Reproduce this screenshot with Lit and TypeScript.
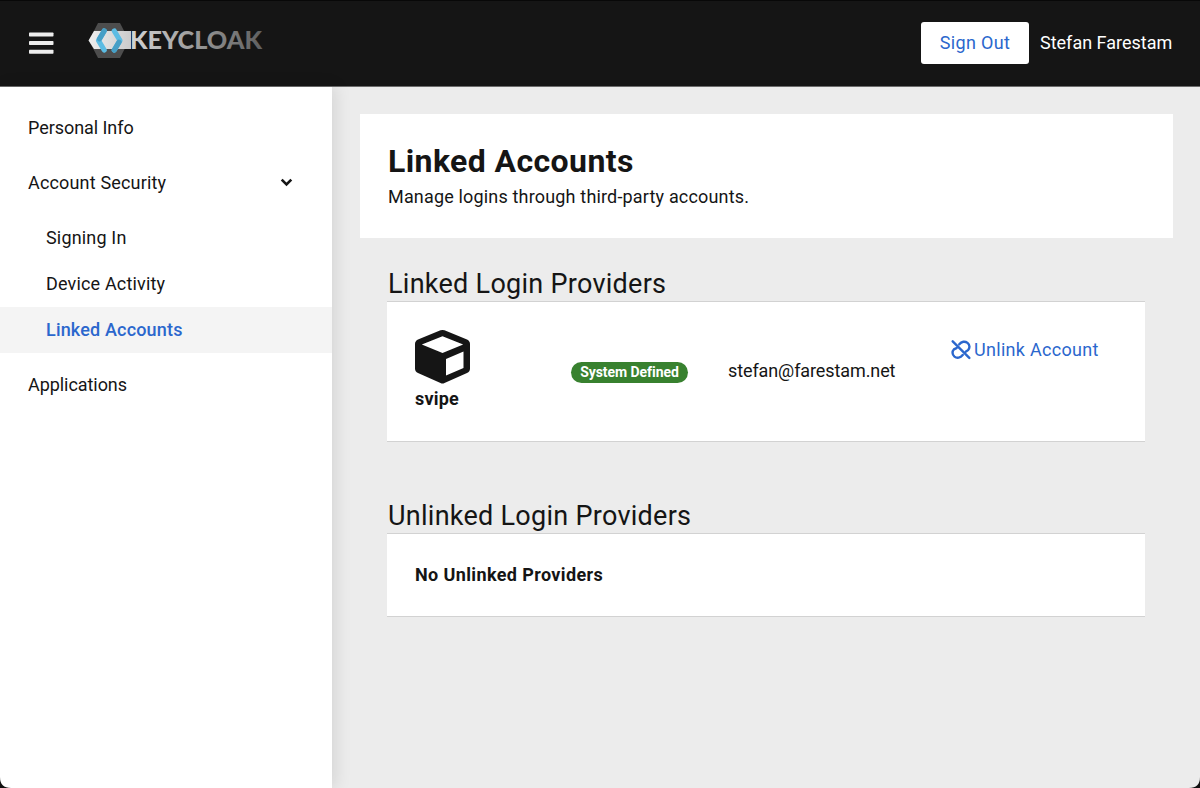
import { LitElement, html, css, svg } from "lit";
import { customElement } from "lit/decorators.js";

@customElement("app-root")
export class AppRoot extends LitElement {
  static styles = css`
    :host { display: flex; flex-direction: column; height: 788px; width: 1200px; box-sizing: border-box; overflow: hidden; position: relative; background: #ececec; color: #151515; font-family: Roboto, "Liberation Sans", sans-serif; font-size: 18px; line-height: 28px; letter-spacing: 0.17px; }
    * { box-sizing: border-box; }
    svg { display: block; flex: none; }
    header { height: 87px; flex: none; background: #151515; border-top: 1px solid #080808; border-bottom: 1px solid #6b6b6b; display: flex; align-items: center; padding: 0 28px 2px; color: #fff; }
    .logo { margin: -3px 0 0 34px; }
    .wordmark { font-family: Lato, sans-serif; font-weight: 900; font-size: 25px; letter-spacing: 0; }
    .signout { margin-left: auto; width: 108px; height: 42px; border-radius: 3px; background: #fff; color: #2b67cd; display: flex; align-items: center; justify-content: center; letter-spacing: 0.35px; }
    .user { width: 132px; margin-left: 11px; white-space: nowrap; letter-spacing: 0; }
    .body { flex: 1; display: flex; min-height: 0; }
    nav { width: 332px; background: #fff; padding-top: 12px; box-shadow: 3px 0 16px rgba(3, 3, 3, 0.11); display: flex; flex-direction: column; }
    .item { height: 55px; padding: 2px 39px 0 28px; display: flex; align-items: center; justify-content: space-between; }
    .tight { letter-spacing: -0.06px; }
    .group { padding: 6px 0 3px; }
    .sub { height: 46px; padding: 0 0 0 46px; display: flex; align-items: center; }
    .current { background: #f4f4f4; color: #2b67cd; font-weight: 500; }
    main { flex: 1; padding: 27px 27px 0 28px; display: flex; flex-direction: column; }
    .head { height: 124px; background: #fff; padding: 27px 28px; }
    h1 { margin: 0; font-size: 32px; line-height: 41px; font-weight: 700; letter-spacing: 0.4px; }
    .head p { margin: 0; line-height: 29px; }
    section { margin: 28px 28px 0 27px; }
    h2 { margin: 0; padding: 1px 0 0 1px; font-size: 27px; line-height: 34px; font-weight: 400; letter-spacing: 0.27px; }
    .list { background: #fff; border-top: 1px solid #d2d2d2; border-bottom: 1px solid #d2d2d2; }
    .row { height: 141px; display: grid; grid-template-columns: 156px 157px 223px 1fr; padding: 27px 28px 0; }
    .provider { display: flex; flex-direction: column; font-weight: 700; }
    .badge { justify-self: start; margin-top: 33px; width: 117px; height: 21px; border-radius: 11px; background: #38812f; color: #fff; font-size: 14px; line-height: 21px; font-weight: 700; text-align: center; letter-spacing: -0.05px; }
    .mail { margin-top: 28px; letter-spacing: -0.1px; }
    .unlink { display: flex; gap: 3px; margin-top: 7px; height: 28px; align-items: center; color: #2b67cd; white-space: nowrap; letter-spacing: 0.3px; }
    .second { margin-top: 56px; }
    .empty { height: 84px; padding: 0 28px; display: flex; align-items: center; font-weight: 700; letter-spacing: 0.38px; }
    .corners { position: absolute; left: 0; bottom: 0; }
  `;

  private logo() {
    return svg`<svg width="176" height="38" viewBox="0 0 176 38">
      <defs><linearGradient id="word" gradientUnits="userSpaceOnUse" x1="42" x2="174" y1="0" y2="0"><stop offset="0" stop-color="#d5d5d5"/><stop offset=".5" stop-color="#999"/><stop offset="1" stop-color="#606060"/></linearGradient>
      <linearGradient id="band" x1="0" x2="1"><stop offset="0" stop-color="#eee"/><stop offset="1" stop-color="#cbcbcb"/></linearGradient></defs>
      <path d="M10 1H32L41 18.500L32 36H10L1 18.500Z" fill="#4d4d4d"/>
      <path d="M6 9H43V27H6L.5 18.500Z" fill="url(#band)"/>
      <g stroke-width="5.200" stroke-linejoin="round" stroke-linecap="round" fill="none">
        <path d="M16.200 9L10.500 18.500L16.200 28" stroke="#5cbce3"/>
        <path d="M16.200 9L11.500 16.800" stroke="#469fc6"/>
        <path d="M26.300 9L32 18.500L26.300 28" stroke="#5cbce3"/>
        <path d="M31 20.200L26.300 28" stroke="#469fc6"/>
      </g>
      <text class="wordmark" x="42" y="27" textLength="132" lengthAdjust="spacingAndGlyphs" fill="url(#word)">KEYCLOAK</text>
    </svg>`;
  }

  render() {
    return html`
      <header>
        <svg width="26" height="24" viewBox="0 0 26 24"><g fill="#ededed"><rect x="1" y="1.500" width="24.500" height="4" rx=".7"/><rect x="1" y="10" width="24.500" height="4" rx=".7"/><rect x="1" y="18.700" width="24.500" height="4" rx=".7"/></g></svg>
        <div class="logo">${this.logo()}</div>
        <div class="signout">Sign Out</div>
        <div class="user">Stefan Farestam</div>
      </header>
      <div class="body">
        <nav>
          <div class="item tight">Personal Info</div>
          <div class="item">Account Security
            <svg width="13" height="9" viewBox="0 0 13 9"><path d="M1.700 1.700L6.500 6.500L11.300 1.700" fill="none" stroke="#151515" stroke-width="2.600"/></svg>
          </div>
          <div class="group">
            <div class="sub">Signing In</div>
            <div class="sub">Device Activity</div>
            <div class="sub current">Linked Accounts</div>
          </div>
          <div class="item tight">Applications</div>
        </nav>
        <main>
          <div class="head"><h1>Linked Accounts</h1><p>Manage logins through third-party accounts.</p></div>
          <section>
            <h2>Linked Login Providers</h2>
            <div class="list row">
              <div class="provider">
                <svg width="55" height="56" viewBox="0 0 55 56"><path fill="#151515" fill-rule="evenodd" d="M25.500 1.300Q27.500 .5 29.500 1.300L52 10.500Q55 12 55 15V39.500Q55 42.500 52 44L29.500 54Q27.500 55 25.500 54L3 44Q0 42.500 0 39.500V15Q0 12 3 10.500ZM27.500 7.300L6.800 15.500L27.500 24L48.200 15.500ZM31 30V46.500L48.500 39V22.500Z"/></svg>
                svipe
              </div>
              <div class="badge">System Defined</div>
              <div class="mail">stefan@farestam.net</div>
              <div class="unlink">
                <svg width="20" height="20" viewBox="0 0 20 20" fill="none" stroke="#2b67cd" stroke-width="2.400" stroke-linecap="round"><path d="M1.700 1.300L18.300 17.900M8.300 4.200C10.500 1.400 14 .9 16.500 2.900C19 5 19 8 17 10.200L15 11.600M11.700 15C9.500 17.800 6 18.600 3.500 16.600C1 14.500 1 11.500 3 9.300L5.500 8.200"/></svg>
                Unlink Account
              </div>
            </div>
          </section>
          <section class="second">
            <h2>Unlinked Login Providers</h2>
            <div class="list empty">No Unlinked Providers</div>
          </section>
        </main>
      </div>
      <svg class="corners" width="1200" height="11" viewBox="0 0 1200 11"><path d="M0 0Q0 11 11 11H0ZM1200 0Q1200 11 1189 11H1200Z" fill="#111"/></svg>
    `;
  }
}
